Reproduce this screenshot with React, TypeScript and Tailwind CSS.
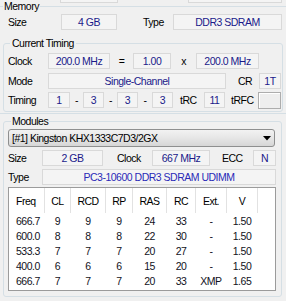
import React from 'react';

const box = 'h-[16px] flex items-center justify-center border border-[#d9d9d9] bg-[#f4f4f4] text-[#1a1a8a]';

const cols = [
  { name: 'Freq', w: 'w-[36px] justify-start pl-[7px]' },
  { name: 'CL', w: 'w-[26px] justify-center' },
  { name: 'RCD', w: 'w-[35px] justify-center' },
  { name: 'RP', w: 'w-[27px] justify-center' },
  { name: 'RAS', w: 'w-[34px] justify-center' },
  { name: 'RC', w: 'w-[29px] justify-center' },
  { name: 'Ext.', w: 'w-[31px] justify-center' },
  { name: 'V', w: 'w-[31px] justify-center' },
];

const rows = [
  ['666.7', '9', '9', '9', '24', '33', '-', '1.50'],
  ['600.0', '8', '8', '8', '22', '30', '-', '1.50'],
  ['533.3', '7', '7', '7', '20', '27', '-', '1.50'],
  ['400.0', '6', '6', '6', '15', '20', '-', '1.50'],
  ['666.7', '7', '7', '7', '20', '33', 'XMP', '1.65'],
];

const App: React.FC = () => {
  return (
    <div className="w-[286px] h-[301px] overflow-hidden bg-[#f0f0f0] font-['Liberation_Sans',Arial,sans-serif] text-[10.5px] tracking-[-0.5px] leading-[12px] text-black">
      {/* cut-off boxes from the section above */}
      <div className="flex h-[3px]">
        <div className="ml-[60px] w-[58px] border-x border-b border-[#d9d9d9] bg-[#f4f4f4]" />
        <div className="ml-[70px] w-[94px] border-x border-b border-[#d9d9d9] bg-[#f4f4f4]" />
      </div>

      {/* Memory */}
      <fieldset className="-mt-[3px] -ml-[3px] w-[292px] border border-[#d5dfe5] rounded-[3px] pb-[1px]">
        <legend className="ml-[5px] px-[1px] h-[12px]">Memory</legend>
        <div className="flex items-center h-[16px] mt-[2px] pl-[10px]">
          <span className="w-[53px]">Size</span>
          <div className={`${box} w-[56px]`}>4 GB</div>
          <span className="w-[56px] pl-[26px]">Type</span>
          <div className={`${box} w-[109px]`}>DDR3 SDRAM</div>
        </div>

        {/* Current Timing */}
        <fieldset className="mt-[7px] ml-[5px] w-[280px] border border-[#d5dfe5] rounded-[3px] pb-[3px]">
          <legend className="ml-[6px] px-[2px] h-[12px]">Current Timing</legend>
          <div className="flex items-center h-[16px] mt-[4px] pl-[4px]">
            <span className="w-[40px]">Clock</span>
            <div className={`${box} w-[62px]`}>200.0 MHz</div>
            <span className="w-[23px] text-center">=</span>
            <div className={`${box} w-[38px]`}>1.00</div>
            <span className="w-[25px] text-center">x</span>
            <div className={`${box} w-[63px]`}>200.0 MHz</div>
          </div>
          <div className="flex items-center h-[16px] mt-[4px] pl-[4px]">
            <span className="w-[40px]">Mode</span>
            <div className={`${box} w-[178px]`}>Single-Channel</div>
            <span className="w-[33px] pl-[12px]">CR</span>
            <div className={`${box} w-[22px]`}>1T</div>
          </div>
          <div className="flex items-center h-[16px] mt-[3px] pl-[4px]">
            <span className="w-[40px]">Timing</span>
            <div className={`${box} w-[22px]`}>1</div>
            <span className="w-[13px] text-center">-</span>
            <div className={`${box} w-[21px]`}>3</div>
            <span className="w-[13px] text-center">-</span>
            <div className={`${box} w-[21px]`}>3</div>
            <span className="w-[14px] text-center">-</span>
            <div className={`${box} w-[21px]`}>3</div>
            <span className="w-[31px] pl-[7px]">tRC</span>
            <div className={`${box} w-[21px]`}>11</div>
            <span className="w-[33px] pl-[6px]">tRFC</span>
            <div className="h-[17px] w-[23px] border border-[#adadad] bg-[#eeeeee] shadow-[inset_1px_1px_0_#ffffff]" />
          </div>
        </fieldset>
      </fieldset>

      {/* Modules */}
      <fieldset className="mt-[1px] ml-[3px] w-[279px] border border-[#d5dfe5] rounded-[3px] pb-[5px]">
        <legend className="ml-[7px] px-[1px] h-[12px]">Modules</legend>
        <div className="mt-[2px] ml-[4px] w-[267px] h-[18px] flex items-center justify-between rounded-[3px] border border-[#8e8f8f] bg-gradient-to-b from-[#f2f2f2] via-[#e6e6e6] to-[#d6d6d6] pl-[3px] pr-[3px]">
          <span>[#1] Kingston KHX1333C7D3/2GX</span>
          <svg width="8" height="5" viewBox="0 0 8 5" className="mt-[1px]">
            <polygon points="0,0 8,0 4,4.5" fill="#000" />
          </svg>
        </div>
        <div className="flex items-center h-[16px] mt-[3px] pl-[4px]">
          <span className="w-[34px]">Size</span>
          <div className={`${box} w-[61px]`}>2 GB</div>
          <span className="w-[49px] pl-[14px]">Clock</span>
          <div className={`${box} w-[58px]`}>667 MHz</div>
          <span className="w-[43px] pl-[12px]">ECC</span>
          <div className={`${box} w-[23px]`}>N</div>
        </div>
        <div className="flex items-center h-[16px] mt-[3px] pl-[4px]">
          <span className="w-[34px]">Type</span>
          <div className={`${box} w-[234px] text-[#2a2ab8]`}>PC3-10600 DDR3 SDRAM UDIMM</div>
        </div>

        <div className="mt-[2px] ml-[4px] w-[268px] h-[104px] border border-[#9b9b9b] bg-white">
          <div className="flex h-[25px]">
            {cols.map((c) => (
              <div key={c.name} className={`flex items-center border-r border-[#e2e2e2] ${c.w}`}>
                {c.name}
              </div>
            ))}
            <div className="flex-1" />
          </div>
          {rows.map((r, i) => (
            <div key={i} className="flex h-[15px] text-[#111122]">
              {r.map((v, j) => (
                <div key={j} className={`flex items-center border-r border-transparent ${cols[j].w}`}>
                  {v}
                </div>
              ))}
            </div>
          ))}
        </div>
      </fieldset>
    </div>
  );
};

export default App;
